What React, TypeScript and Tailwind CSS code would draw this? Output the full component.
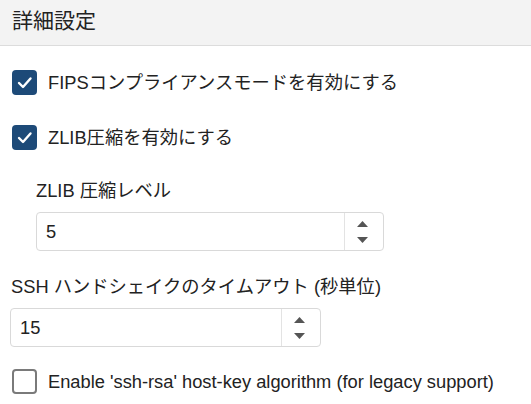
import React from "react";

function CheckedBox() {
  return (
    <div className="w-[25px] h-[25px] rounded-[4px] bg-[#1d4a78] flex items-center justify-center shrink-0">
      <svg width="17" height="17" viewBox="0 0 17 17">
        <path d="M3 9 L7 13 L14.5 4.5" fill="none" stroke="#fff" strokeWidth="2.4" strokeLinecap="round" strokeLinejoin="round" />
      </svg>
    </div>
  );
}

function EmptyBox() {
  return <div className="w-[25px] h-[25px] rounded-[4px] border-2 border-[#7a7a7a] bg-white shrink-0" />;
}

function NumberField({ value, width }: { value: string; width: string }) {
  return (
    <div className={`${width} h-[39px] flex border border-[#d9d9d9] rounded-[4px] bg-white`}>
      <div className="flex-1 flex items-center pl-[9px] text-[18.3px] text-[#222]">{value}</div>
      <div className="w-[39px] border-l border-[#e3e3e3] flex flex-col items-center justify-center gap-[10px] pr-[3px]">
        <svg width="11" height="6" viewBox="0 0 11 6">
          <path d="M5.5 0 L11 6 L0 6 Z" fill="#555" />
        </svg>
        <svg width="11" height="6" viewBox="0 0 11 6">
          <path d="M0 0 L11 0 L5.5 6 Z" fill="#555" />
        </svg>
      </div>
    </div>
  );
}

export default function App() {
  return (
    <div
      className="w-[531px] h-[404px] bg-white overflow-hidden text-[#222]"
      style={{ fontFamily: '"Liberation Sans", Arial, "Noto Sans CJK JP", sans-serif' }}
    >
      <div className="h-[46px] bg-[#f3f3f3] border-b border-[#dcdcdc] flex items-center pl-[12px] text-[21px] pb-[4px]">
        詳細設定
      </div>
      <div className="pl-[12px]">
        <div className="mt-[24px] flex items-center gap-[11px] h-[25px] text-[18.3px]">
          <CheckedBox />
          <span>FIPSコンプライアンスモードを有効にする</span>
        </div>
        <div className="mt-[30px] flex items-center gap-[11px] h-[25px] text-[18.3px]">
          <CheckedBox />
          <span>ZLIB圧縮を有効にする</span>
        </div>
        <div className="pl-[24px]">
          <div className="mt-[29px] h-[24px] leading-[24px] text-[18.3px]">ZLIB 圧縮レベル</div>
          <div className="mt-[9px]">
            <NumberField value="5" width="w-[348px]" />
          </div>
        </div>
        <div className="ml-[-1px] mt-[24px] h-[24px] leading-[24px] text-[18.3px]">SSH ハンドシェイクのタイムアウト (秒単位)</div>
        <div className="ml-[-2px] mt-[9px]">
          <NumberField value="15" width="w-[311px]" />
        </div>
        <div className="mt-[22px] flex items-center gap-[11px] h-[25px] text-[18.3px]">
          <EmptyBox />
          <span>Enable 'ssh-rsa' host-key algorithm (for legacy support)</span>
        </div>
      </div>
    </div>
  );
}
